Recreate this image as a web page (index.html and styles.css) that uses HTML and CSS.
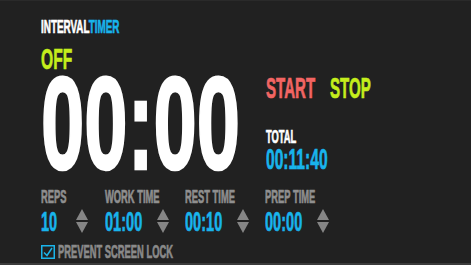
FILE: index.html
```html
<!DOCTYPE html>
<html lang="en">
<head>
  <meta charset="UTF-8">
  <title>Interval Timer</title>
  <link rel="stylesheet" href="styles.css">
</head>
<body>
  <div class="screen">
    <div class="brand"><span class="sq">INTERVAL<span class="blue">TIMER</span></span></div>

    <div class="main">
      <div class="clock-col">
        <div class="state"><span class="sq">OFF</span></div>
        <div class="clock"><span class="sq">00:00</span></div>
      </div>
      <div class="side">
        <div class="controls">
          <span class="sq start">START</span>
          <span class="sq stop">STOP</span>
        </div>
        <div class="total-label"><span class="sq">TOTAL</span></div>
        <div class="total"><span class="sq">00:11:40</span></div>
      </div>
    </div>

    <div class="settings">
      <div class="setting reps">
        <div class="label"><span class="sq">REPS</span></div>
        <div class="value-row">
          <span class="sq value">10</span>
          <svg class="arrows" viewBox="0 0 12 24"><polygon points="6,0 12,11 0,11"/><polygon points="0,13 12,13 6,24"/></svg>
        </div>
      </div>
      <div class="setting">
        <div class="label"><span class="sq">WORK TIME</span></div>
        <div class="value-row">
          <span class="sq value">01:00</span>
          <svg class="arrows" viewBox="0 0 12 24"><polygon points="6,0 12,11 0,11"/><polygon points="0,13 12,13 6,24"/></svg>
        </div>
      </div>
      <div class="setting">
        <div class="label"><span class="sq">REST TIME</span></div>
        <div class="value-row">
          <span class="sq value">00:10</span>
          <svg class="arrows" viewBox="0 0 12 24"><polygon points="6,0 12,11 0,11"/><polygon points="0,13 12,13 6,24"/></svg>
        </div>
      </div>
      <div class="setting">
        <div class="label"><span class="sq">PREP TIME</span></div>
        <div class="value-row">
          <span class="sq value">00:00</span>
          <svg class="arrows" viewBox="0 0 12 24"><polygon points="6,0 12,11 0,11"/><polygon points="0,13 12,13 6,24"/></svg>
        </div>
      </div>
    </div>

    <div class="lock">
      <svg class="check" viewBox="0 0 14 14"><rect x="0.75" y="0.75" width="12.5" height="12.5" fill="none" stroke="#1ab4ea" stroke-width="1.5"/><polyline points="3,7.5 6,10.5 11,3" fill="none" stroke="#1ab4ea" stroke-width="1.5"/></svg>
      <span class="lock-text"><span class="sq">PREVENT SCREEN LOCK</span></span>
    </div>
  </div>
</body>
</html>
```

FILE: styles.css
```css
body {
  margin: 0;
  background-color: #212121;
  font-family: "Liberation Sans", Arial, sans-serif;
  font-weight: bold;
  overflow: hidden;
}

.screen {
  height: 265px;
  box-sizing: border-box;
  padding: 16px 0 0 41px;
  border-top: 1px solid #2a2a2a;
  border-bottom: 2px solid #3b3b3b;
}

/* squeeze the text to look like a condensed display face */
.sq {
  display: inline-block;
  transform: scaleX(.52);
  transform-origin: 0 0;
  white-space: nowrap;
  -webkit-text-stroke: .7px currentColor;
}

.blue {
  color: #18b4ec;
}

.brand {
  font-size: 19px;
  line-height: 1;
  color: #fff;
}

.main {
  display: flex;
  margin-top: 8px;
}

.clock-col {
  width: 225px;
}

.state {
  font-size: 30px;
  line-height: 1;
  color: #c5ee1c;
}

.clock {
  font-size: 132px;
  line-height: 100px;
  height: 100px;
  color: #fff;
}

.clock .sq {
  transform: scaleX(.59);
  -webkit-text-stroke: 2.5px currentColor;
}

.side {
  padding-top: 30px;
}

.controls {
  display: flex;
  font-size: 29px;
  line-height: 1;
}

.start {
  width: 64px;
  color: #f26563;
}

.stop {
  color: #c5ee1c;
}

.total-label {
  font-size: 18px;
  line-height: 1;
  color: #fff;
  margin-top: 25px;
}

.total {
  font-size: 30px;
  line-height: 1;
  color: #18b4ec;
  margin-top: -2px;
}

.settings {
  display: grid;
  grid-template-columns: 64px 80px 80px 80px;
  margin-top: 14px;
}

.label {
  font-size: 18px;
  line-height: 1;
  color: #8f8f8f;
}

.value-row {
  display: flex;
  margin-top: 1.5px;
}

.value {
  width: 52px;
  font-size: 28px;
  line-height: 1;
  color: #18b4ec;
}

.reps .value {
  width: 35px;
}

.arrows {
  width: 12px;
  height: 24px;
  margin-top: 1.7px;
  fill: #858585;
}

.lock {
  display: flex;
  align-items: flex-start;
  margin-top: 7px;
}

.check {
  width: 14px;
  height: 14px;
  margin: 2.4px 3px 0 0;
}

.lock-text {
  font-size: 18px;
  line-height: 1;
  color: #8a8a8a;
}
```
